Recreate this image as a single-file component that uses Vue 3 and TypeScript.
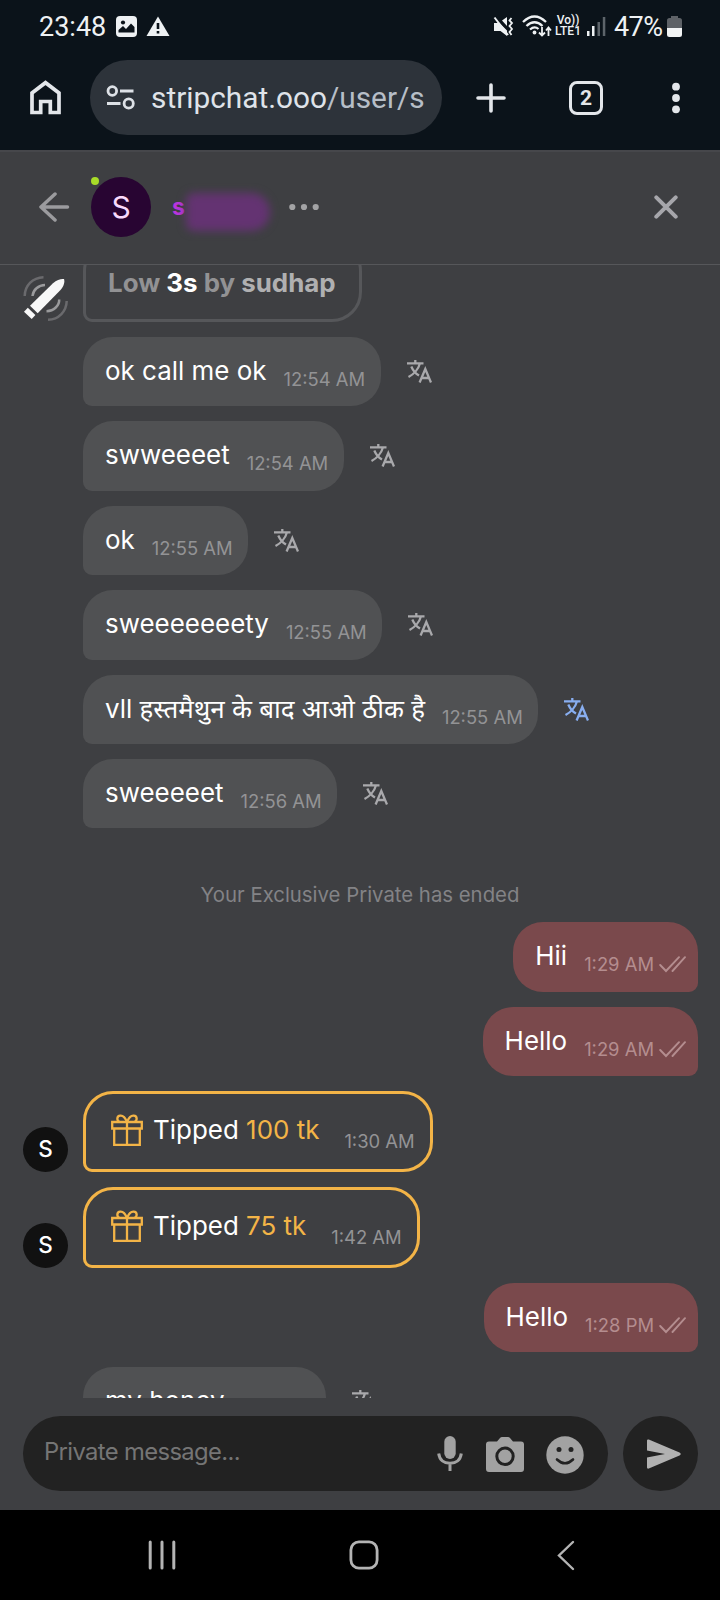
<script setup lang="ts">
interface Message {
  kind: 'in' | 'out' | 'tip' | 'note'
  text: string
  time?: string
  amount?: string
  translated?: boolean
}

const messages: Message[] = [
  { kind: 'in', text: 'ok call me ok', time: '12:54 AM' },
  { kind: 'in', text: 'swweeeet', time: '12:54 AM' },
  { kind: 'in', text: 'ok', time: '12:55 AM' },
  { kind: 'in', text: 'sweeeeeeety', time: '12:55 AM' },
  { kind: 'in', text: 'vll हस्तमैथुन के बाद आओ ठीक है', time: '12:55 AM', translated: true },
  { kind: 'in', text: 'sweeeeet', time: '12:56 AM' },
  { kind: 'note', text: 'Your Exclusive Private has ended' },
  { kind: 'out', text: 'Hii', time: '1:29 AM' },
  { kind: 'out', text: 'Hello', time: '1:29 AM' },
  { kind: 'tip', text: 'Tipped', amount: '100 tk', time: '1:30 AM' },
  { kind: 'tip', text: 'Tipped', amount: '75 tk', time: '1:42 AM' },
  { kind: 'out', text: 'Hello', time: '1:28 PM' },
  { kind: 'in', text: 'my honey', time: '1:28 PM' },
]
</script>

<template>
  <div class="phone">
    <div class="status">
      <span class="clock">23:48</span>
      <svg class="i-image" width="21" height="21" viewBox="0 0 21 21">
        <rect width="21" height="21" rx="4" fill="#eef1f3" />
        <circle cx="7" cy="6.5" r="2.1" fill="#0b131a" />
        <path d="M2.5 16.5V14L7 10l3 3 5-5.500 3.500 3.500v5.500z" fill="#0b131a" />
      </svg>
      <svg class="i-warn" width="24" height="20" viewBox="0 0 24 20">
        <path d="M12 0.500L23.500 20H0.500z" fill="#eef1f3" />
        <path d="M12 7v6M12 15v2.500" stroke="#0b131a" stroke-width="2.600" />
      </svg>
      <span class="spacer"></span>
      <svg class="i-mute" width="21" height="21" viewBox="0 0 21 21" fill="none">
        <path d="M1 7h3l1.500-1L14 14.500V20L7.500 15H1zM9 4.500L14 1v9z" fill="#eef1f3" />
        <path d="M1.500 1.500L15 19" stroke="#eef1f3" stroke-width="2" />
        <path d="M18.500 2l-2 2.500 2.500 2.500-2.500 3 2.500 3-2.500 3 2 3" stroke="#eef1f3" stroke-width="1.800" />
      </svg>
      <svg class="i-wifi" width="30" height="22" viewBox="0 0 30 22" fill="none" stroke="#eef1f3" stroke-width="2.300">
        <path d="M1 7Q12.500-4 24 7M4.500 11Q12.500 3.500 20.500 11M8 14.500Q12.500 10.500 16.500 14" />
        <circle cx="12.500" cy="17.500" r="1.900" fill="#eef1f3" stroke="none" />
        <path d="M20 12v8.500M17 17.500l3 3 3-3M26.500 21v-8M24 15.500l2.500-3 2.500 3" stroke-width="1.800" />
      </svg>
      <span class="volte"><b>Vo))</b><b>LTE1</b></span>
      <svg class="i-signal" width="19" height="19" viewBox="0 0 19 19">
        <rect x="0" y="14" width="2.500" height="5" fill="#eef1f3" />
        <rect x="5" y="9" width="2.500" height="10" fill="#eef1f3" />
        <rect x="10.500" y="5" width="2.500" height="14" fill="#5d646a" />
        <rect x="15.800" y="0" width="2.500" height="19" fill="#5d646a" />
      </svg>
      <span class="percent">47%</span>
      <svg class="i-batt" width="15" height="21" viewBox="0 0 15 21">
        <path d="M4 0h7v2h1.500A2.500 2.500 0 0 1 15 4.500V12H0V4.500A2.500 2.500 0 0 1 2.500 2H4z" fill="#5e6267" />
        <path d="M0 12h15v6.500a2.500 2.500 0 0 1-2.500 2.500h-10A2.500 2.500 0 0 1 0 18.500z" fill="#f2f4f5" />
      </svg>
    </div>

    <div class="browser">
      <svg class="i-home" width="31" height="35" viewBox="0 0 31 35" fill="none" stroke="#e3e6ea" stroke-width="3.700">
        <path d="M2 32.500V13L15.500 2.700 29 13v19.500H20.300V21.500H10.700v11z" />
      </svg>
      <div class="url">
        <svg width="29" height="25" viewBox="0 0 29 25" fill="none" stroke="#dde1e6" stroke-width="2.800">
          <circle cx="6.300" cy="6" r="4.300" />
          <path d="M14 6h13.500M1 18.500h13.500" />
          <circle cx="22.700" cy="18.500" r="4.600" />
        </svg>
        <span class="addr">stripchat.ooo<i>/user/s</i></span>
      </div>
      <svg class="i-plus" width="30" height="30" viewBox="0 0 30 30" stroke="#e3e6ea" stroke-width="3.600" stroke-linecap="round">
        <path d="M15 2v26M2 15h26" />
      </svg>
      <span class="tabs">2</span>
      <svg class="i-more" width="10" height="32" viewBox="0 0 10 32" fill="#e3e6ea">
        <circle cx="5" cy="4.700" r="3.900" /><circle cx="5" cy="16" r="3.900" /><circle cx="5" cy="27.300" r="3.900" />
      </svg>
    </div>

    <header class="head">
      <svg class="i-back" width="31" height="30" viewBox="0 0 31 30" fill="none" stroke="#9b9b9e" stroke-width="3.500" stroke-linecap="round" stroke-linejoin="round">
        <path d="M28.500 15H2M16 2L2 15l14 13" />
      </svg>
      <div class="avatar">S<i class="online"></i></div>
      <span class="name">s</span>
      <span class="smudge"></span>
      <svg class="i-dots" width="30" height="8" viewBox="0 0 30 8" fill="#a3a3a5">
        <circle cx="3.300" cy="4" r="3.100" /><circle cx="15" cy="4" r="3.100" /><circle cx="26.700" cy="4" r="3.100" />
      </svg>
      <span class="spacer"></span>
      <svg class="i-close" width="24" height="24" viewBox="0 0 24 24" stroke="#a6a6ab" stroke-width="4" stroke-linecap="round">
        <path d="M2.300 2.300l19.400 19.400M21.700 2.300L2.300 21.700" />
      </svg>
    </header>

    <main class="list">
      <div class="row toyrow">
        <svg class="i-toy" width="46" height="48" viewBox="0 0 46 48" fill="none" stroke-width="2.500">
          <path d="M20.500 3.200C9.500 3.500 1.700 12 1.700 22" stroke="#6a6a6d" />
          <path d="M22 11C15.500 11 10 16 9.500 22" stroke="#9a9a9c" />
          <path d="M43.700 27C43.500 37 36 45.500 25 45.700" stroke="#6a6a6d" />
          <path d="M36.200 25.500C36.500 31.500 31 37 23.500 37.200" stroke="#9a9a9c" />
          <path d="M7 31.700L30 9.200C34 5.500 38.500 4.500 41 5c1 2.500 0 7-3.500 11L14.700 39.300z" fill="#f8f8f8" />
          <path d="M1 37.700l3.800-4 7.600 7.300-3.700 4z" fill="#f8f8f8" />
        </svg>
        <div class="bubble toy">Low <b>3s</b> by <em>sudhap</em></div>
      </div>

      <template v-for="(m, n) in messages" :key="n">
        <p v-if="m.kind === 'note'" class="note">{{ m.text }}</p>
        <div v-else-if="m.kind === 'tip'" class="row tiprow">
          <span class="mini">S</span>
          <div class="bubble tip">
            <svg class="i-gift" width="32" height="33" viewBox="0 0 32 33" fill="none" stroke="#f3b447" stroke-width="2.300">
              <path d="M1.200 8h29.600v6.500H1.200zM3.200 14.500v16.300h25.600V14.500M16 8v22.800" />
              <path d="M16 8C14 3 11.500 1.500 9.300 1.700 5.500 2 5.500 6.500 8.500 8M16 8c2-5 4.500-6.500 6.700-6.300C26.500 2 26.500 6.500 23.500 8" />
            </svg>
            <span class="text">{{ m.text }} <b>{{ m.amount }}</b></span>
            <span class="time">{{ m.time }}</span>
          </div>
        </div>
        <div v-else class="row" :class="m.kind">
          <div class="bubble">
            <span class="text">{{ m.text }}</span>
            <span class="time">{{ m.time }}</span>
            <svg v-if="m.kind === 'out'" class="i-check" width="27" height="17" viewBox="0 0 27 17" fill="none" stroke="#b48d8f" stroke-width="1.900" stroke-linecap="round">
              <path d="M1.200 9l5.800 6L20 1.200M13.500 15L26 1.200" />
            </svg>
          </div>
          <svg v-if="m.kind === 'in'" class="i-trans" :class="{ on: m.translated }" width="25" height="23" viewBox="0 0 25 23" fill="none" stroke="currentColor" stroke-width="2.300">
            <path d="M0 3.300h16.500M8.300 0v3.300M13 3.300C11.500 9 6.500 14.500 1.500 17M4.300 6.500C6 10.500 8.500 13.500 12 15.500" />
            <path d="M12.600 22.500L18.300 9l5.700 13.500M14.500 18h7.600" />
          </svg>
        </div>
      </template>
    </main>

    <footer class="composer">
      <div class="input">
        <span class="placeholder">Private message...</span>
        <svg class="i-mic" width="26" height="36" viewBox="0 0 26 36">
          <rect x="7.300" y="0" width="11.400" height="23" rx="5.700" fill="#a2a2a2" />
          <path d="M1.700 17.500C2.500 24 7 27.300 13 27.300S23.500 24 24.300 17.500M13 27v8" fill="none" stroke="#a2a2a2" stroke-width="3" />
        </svg>
        <svg class="i-cam" width="38" height="35" viewBox="0 0 38 35">
          <path d="M3 4.500h8L14 1q.800-1 2-1h6q1.200 0 2 1l3 3.500h8q3 0 3 3V32q0 3-3 3H3q-3 0-3-3V7.500q0-3 3-3z" fill="#a2a2a2" />
          <circle cx="19" cy="19.300" r="8.200" fill="#a2a2a2" stroke="#222" stroke-width="3" />
        </svg>
        <svg class="i-smile" width="38" height="38" viewBox="0 0 38 38">
          <circle cx="19" cy="19" r="18.700" fill="#a2a2a2" />
          <circle cx="13" cy="13.500" r="2.500" fill="#222" /><circle cx="25" cy="13.500" r="2.500" fill="#222" />
          <path d="M11 23.500q8 7.500 16 0" fill="none" stroke="#222" stroke-width="2.600" stroke-linecap="round" />
        </svg>
      </div>
      <div class="send">
        <svg width="34" height="30" viewBox="0 0 34 30">
          <path d="M0 1.500Q0 0 1.800.500L32.500 13.500Q35 15 32.500 16.500L1.800 29.500Q0 30 0 28.500V18.500L18 15 0 11.500z" fill="#b1b1b1" />
        </svg>
      </div>
    </footer>

    <nav class="nav">
      <svg class="n1" width="28" height="30" viewBox="0 0 28 30" stroke="#b4b4b4" stroke-width="3" stroke-linecap="round"><path d="M2.200 2v26M14 2v26M25.800 2v26" /></svg>
      <svg class="n2" width="30" height="30" viewBox="0 0 30 30" fill="none" stroke="#b4b4b4" stroke-width="2.800"><rect x="1.900" y="1.900" width="26.200" height="26.200" rx="8" /></svg>
      <svg class="n3" width="18" height="31" viewBox="0 0 18 31" fill="none" stroke="#b4b4b4" stroke-width="2.400" stroke-linecap="round"><path d="M16 2L2 15.500 16 29" /></svg>
    </nav>
  </div>
</template>

<style>
body {
  margin: 0;
  background: #000;
}
</style>

<style scoped>
.phone {
  width: 720px;
  height: 1600px;
  display: flex;
  flex-direction: column;
  overflow: hidden;
  box-sizing: border-box;
  background: #3e3f42;
  color: #fff;
  font-family: Inter, "Noto Sans", sans-serif;
}
svg {
  display: block;
  flex: none;
}
.spacer {
  flex: 1;
}
.status {
  flex: none;
  height: 52px;
  display: flex;
  align-items: center;
  padding: 0 38px 0 39px;
  background: #0b131a;
  color: #eef1f3;
  font: 27px/52px Roboto, sans-serif;
}
.clock {
  width: 77px;
  padding-top: 2px;
}
.i-warn {
  margin-left: 9px;
}
.i-wifi {
  margin-left: 8px;
}
.volte {
  width: 26px;
  margin-left: 3px;
  display: flex;
  flex-direction: column;
  align-items: center;
  font: 12px/11px Roboto, sans-serif;
  white-space: nowrap;
}
.volte b {
  font-weight: 500;
}
.i-signal {
  margin-left: 6px;
}
.percent {
  width: 53px;
  margin-left: 8px;
  padding-top: 2px;
  letter-spacing: -0.6px;
}
.browser {
  flex: none;
  height: 98px;
  box-sizing: border-box;
  display: flex;
  align-items: center;
  padding: 0 0 7px 30px;
  background: #0b131a;
}
.url {
  width: 352px;
  height: 75px;
  margin-left: 29px;
  padding-left: 16px;
  box-sizing: border-box;
  display: flex;
  align-items: center;
  border-radius: 38px;
  background: #2d333a;
  font: 29.8px/38px Roboto, sans-serif;
  color: #dfe3e9;
}
.addr {
  margin-left: 16px;
  white-space: nowrap;
}
.addr i {
  font-style: normal;
  color: #b6bec7;
}
.i-plus {
  margin-left: 33.500px;
}
.tabs {
  width: 34px;
  height: 34px;
  margin-left: 63.500px;
  box-sizing: border-box;
  border: 3.500px solid #e3e6ea;
  border-radius: 8px;
  text-align: center;
  font: bold 21px/28px Roboto, sans-serif;
  color: #e3e6ea;
}
.i-more {
  margin-left: 68px;
}
.head {
  flex: none;
  height: 115px;
  box-sizing: border-box;
  display: flex;
  align-items: center;
  padding: 0 42px 2px 39px;
  border-top: 2px solid #46474b;
  border-bottom: 1px solid #56575a;
}
.avatar {
  position: relative;
  width: 60px;
  height: 60px;
  margin: 0 0 1px 21px;
  border-radius: 50%;
  background: #280532;
  color: #f8d9fb;
  text-align: center;
  font-size: 30px;
  line-height: 60px;
}
.online {
  position: absolute;
  left: 0;
  top: 0;
  width: 8px;
  height: 8px;
  border-radius: 50%;
  background: #a8dc28;
}
.name {
  margin-left: 21px;
  font-size: 23px;
  font-weight: 700;
  color: #b935dd;
}
.smudge {
  width: 84px;
  height: 38px;
  margin: 10px 0 0 1px;
  border-radius: 8px 20px 20px 8px;
  background: #643372;
  filter: blur(4px);
}
.i-dots {
  margin-left: 19px;
}
.list {
  flex: none;
  height: 1133px;
  overflow: hidden;
  display: flex;
  flex-direction: column;
  gap: 15px;
}
.row {
  flex: none;
  display: flex;
  padding: 0 22px 0 83px;
}
.toyrow {
  margin-top: -24px;
  padding-left: 23px;
  align-items: flex-end;
}
.bubble {
  height: 69.375px;
  box-sizing: border-box;
  display: flex;
  align-items: baseline;
  padding: 0 15.500px 0 22px;
  border-radius: 30px 30px 30px 9px;
  background: #505153;
  white-space: nowrap;
}
.toy {
  width: 279px;
  height: 81px;
  margin-left: 14px;
  display: block;
  border: 3px solid #56575a;
  background: none;
  font-size: 25.900px;
  font-weight: 700;
  line-height: 78px;
  color: #929294;
}
.toy b {
  font-weight: 700;
  color: #fff;
}
.toy em {
  font-style: normal;
  color: #b0b0b1;
}
.text {
  font-size: 25.95px;
  line-height: 68px;
}
.time {
  margin-left: 17px;
  font-size: 18.4px;
  color: #939395;
}
.i-trans {
  margin: 23px 0 0 26px;
  color: #a9a9ac;
}
.i-trans.on {
  color: #88aef0;
}
.note {
  flex: none;
  height: 26px;
  margin: 38px 0 0;
  text-align: center;
  font-size: 20.35px;
  line-height: 28px;
  color: #838386;
}
.out {
  justify-content: flex-end;
}
.out .bubble {
  padding-right: 12px;
  border-radius: 30px 30px 9px 30px;
  background: #7a494c;
}
.out .time {
  color: #b48d8f;
}
.i-check {
  align-self: flex-start;
  margin: 34px 0 0 5px;
}
.tiprow {
  padding-left: 23px;
  align-items: flex-end;
}
.mini {
  width: 45px;
  height: 45px;
  margin-right: 15px;
  border-radius: 50%;
  background: #111;
  text-align: center;
  font-size: 22.5px;
  font-weight: 500;
  line-height: 44px;
}
.tip {
  height: 81px;
  border: 3px solid #f3b447;
  background: none;
  padding: 0 15px 0 25px;
}
.tip .text {
  margin-left: 10px;
  line-height: 71px;
}
.tip .text b {
  font-weight: 400;
  color: #f3b447;
}
.tip .time {
  margin-left: 25px;
}
.i-gift {
  align-self: flex-start;
  margin-top: 20px;
}
.bubble .time {
  position: relative;
  top: 6px;
}
.bubble.tip .time {
  top: 9px;
}
.composer {
  flex: none;
  height: 112px;
  box-sizing: border-box;
  display: flex;
  padding: 18px 22px 0 23px;
  gap: 15px;
}
.input {
  width: 585px;
  height: 75px;
  box-sizing: border-box;
  display: flex;
  align-items: center;
  padding: 0 24px 0 21px;
  border-radius: 38px;
  background: #222;
}
.placeholder {
  flex: 1;
  font-size: 23.8px;
  letter-spacing: -0.63px;
  color: #757575;
  padding-bottom: 4px;
}
.i-cam {
  margin: 2px 0 0 23px;
}
.i-smile {
  margin: 2px 0 0 22px;
}
.send {
  width: 75px;
  height: 75px;
  box-sizing: border-box;
  padding: 23px 0 0 24px;
  border-radius: 50%;
  background: #222;
}
.nav {
  flex: none;
  height: 90px;
  display: flex;
  align-items: center;
  background: #000;
}
.n1 {
  margin-left: 148px;
}
.n2 {
  margin-left: 172.500px;
}
.n3 {
  margin-left: 178.500px;
}
</style>
